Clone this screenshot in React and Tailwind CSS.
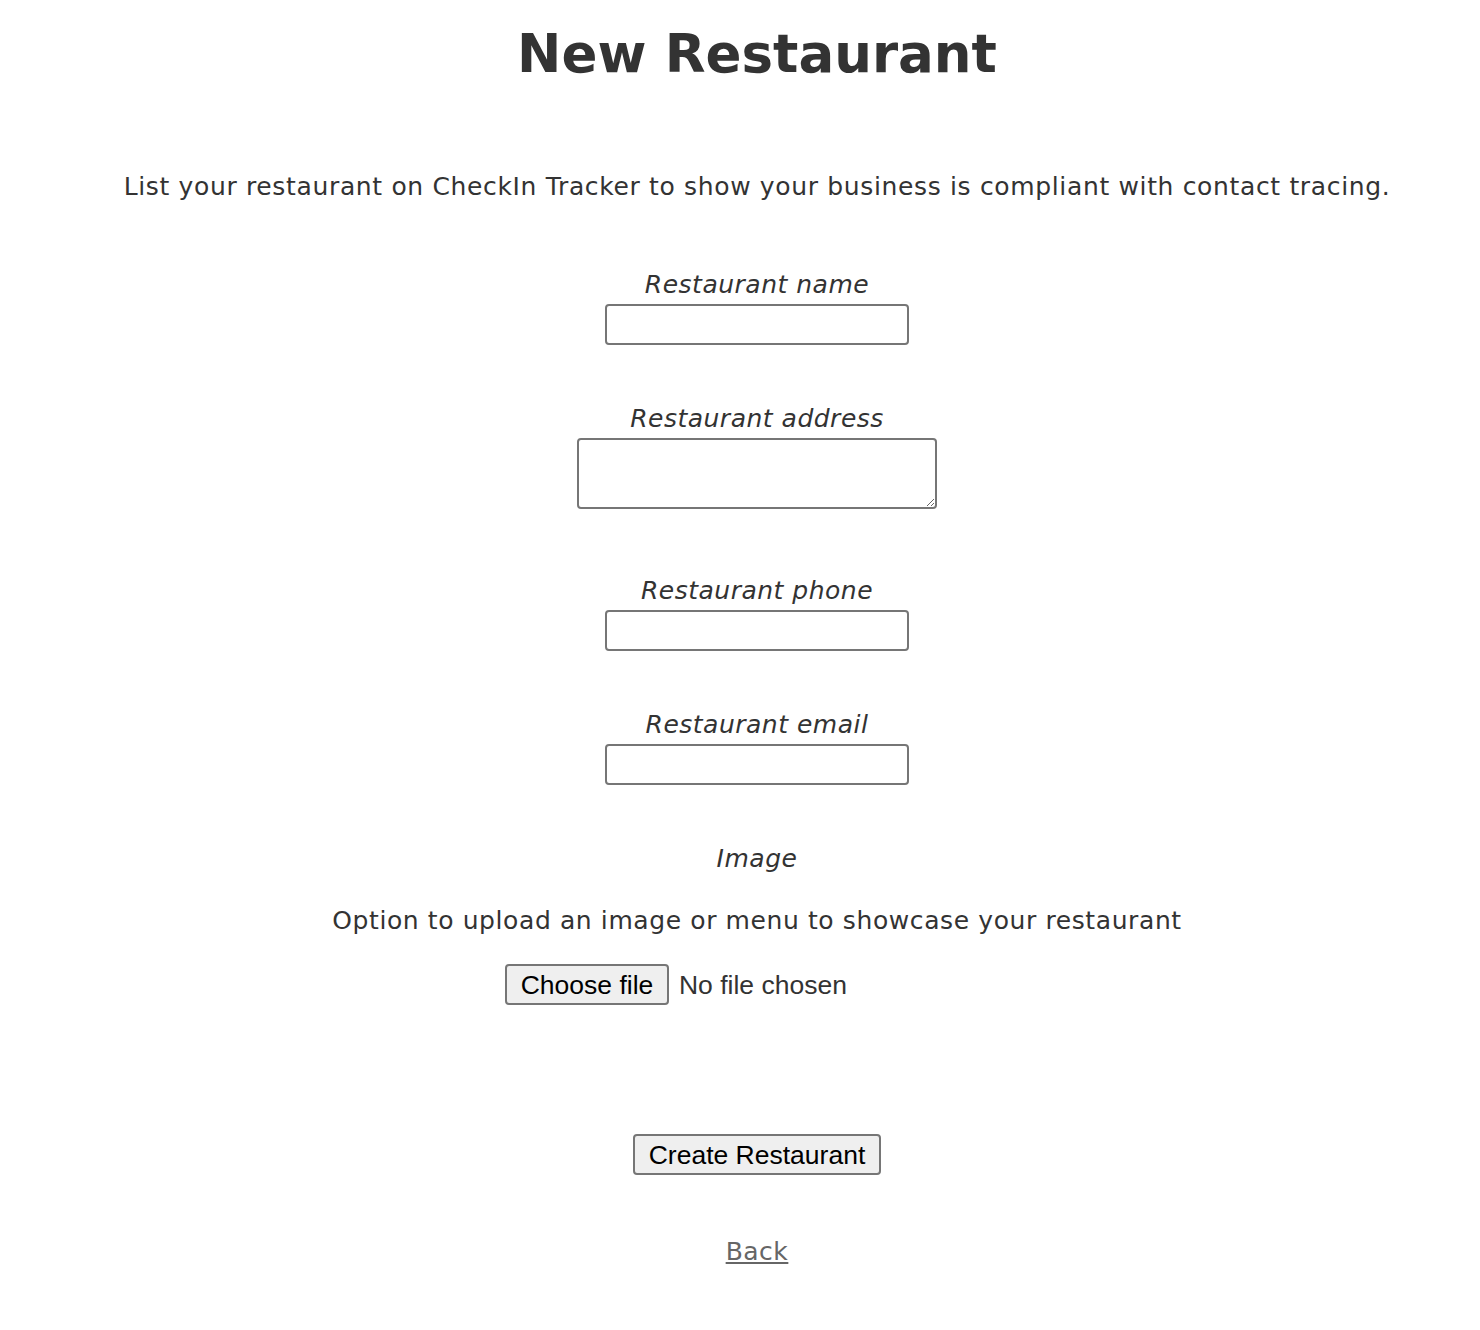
import React from 'react';

const sans = "font-['DejaVu_Sans',Verdana,sans-serif]";
const arial = "font-['Liberation_Sans',Arial,sans-serif]";

function Field({ label, children, className = '' }) {
  return (
    <div className={`flex flex-col items-center ${className}`}>
      <label className="block italic text-[25px] leading-[29px] tracking-[0.5px] mb-[5px]">{label}</label>
      {children}
    </div>
  );
}

export default function App() {
  return (
    <div className={`min-h-screen bg-white text-[#333] pl-[34px] ${sans}`}>
      <div className="flex flex-col items-center text-center">
        <h1 className="mt-[23px] text-[53px] leading-[62px] font-bold">New Restaurant</h1>

        <p className="mt-[87px] text-[25px] leading-[29px] tracking-[0.65px]">
          List your restaurant on CheckIn Tracker to show your business is compliant with contact tracing.
        </p>

        <form className="flex flex-col items-center" onSubmit={(e) => e.preventDefault()}>
          <Field label="Restaurant name" className="mt-[69px]">
            <input type="text" className="w-[304px] h-[41px] border-2 border-[#767676] rounded-[4px] bg-white px-2" />
          </Field>

          <Field label="Restaurant address" className="mt-[59px]">
            <textarea className="block w-[360px] h-[71px] border-2 border-[#767676] rounded-[4px] bg-white px-2 resize" />
          </Field>

          <Field label="Restaurant phone" className="mt-[67px]">
            <input type="tel" className="w-[304px] h-[41px] border-2 border-[#767676] rounded-[4px] bg-white px-2" />
          </Field>

          <Field label="Restaurant email" className="mt-[59px]">
            <input type="email" className="w-[304px] h-[41px] border-2 border-[#767676] rounded-[4px] bg-white px-2" />
          </Field>

          <div className="mt-[59px] flex flex-col items-center">
            <label className="block italic text-[25px] leading-[29px] tracking-[0.5px]">Image</label>
            <p className="mt-[33px] text-[25px] leading-[29px] tracking-[0.6px]">
              Option to upload an image or menu to showcase your restaurant
            </p>
            <div className={`mt-[28px] w-[504px] flex items-center ${arial} text-[26.5px]`}>
              <button
                type="button"
                className="w-[164px] h-[41px] bg-[#efefef] border-2 border-[#767676] rounded-[4px] text-black"
              >
                Choose file
              </button>
              <span className="ml-[10px] mt-[3px] text-[#333]">No file chosen</span>
            </div>
          </div>

          <button
            type="submit"
            className={`mt-[128px] w-[248px] h-[41px] bg-[#efefef] border-2 border-[#767676] rounded-[4px] text-black text-[26.5px] ${arial}`}
          >
            Create Restaurant
          </button>
        </form>

        <a href="#" className="mt-[62px] mb-[60px] text-[25px] leading-[29px] tracking-[0.5px] text-[#666] underline">
          Back
        </a>
      </div>
    </div>
  );
}
